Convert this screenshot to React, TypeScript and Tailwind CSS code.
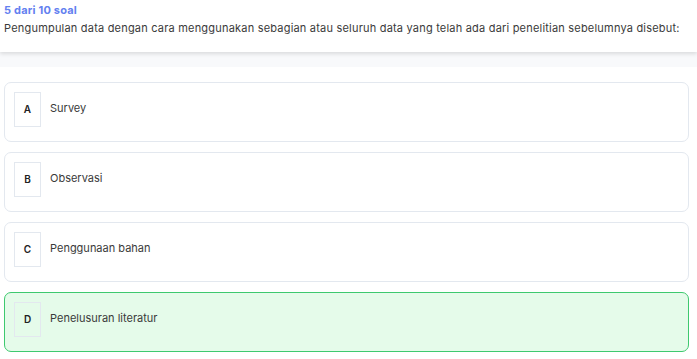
import React from "react";

const options = [
  { key: "A", text: "Survey", correct: false },
  { key: "B", text: "Observasi", correct: false },
  { key: "C", text: "Penggunaan bahan", correct: false },
  { key: "D", text: "Penelusuran literatur", correct: true },
];

export default function App() {
  return (
    <div
      className="w-[697px] h-[359px] bg-white overflow-hidden"
      style={{ fontFamily: "Inter, 'Open Sans', sans-serif" }}
    >
      <div className="relative z-10 h-[52px] bg-white shadow-[0_2px_4px_rgba(0,0,0,0.12)] px-[4px] pt-[3px]">
        <div className="text-[11px] leading-[14px] font-bold tracking-[0.2px] text-[#6380f0]">5 dari 10 soal</div>
        <div className="mt-[4px] text-[11px] leading-[14px] text-[#3a3a3a] tracking-[0.2px] whitespace-nowrap">
          Pengumpulan data dengan cara menggunakan sebagian atau seluruh data yang telah ada dari penelitian sebelumnya disebut:
        </div>
      </div>
      <div className="h-[15px] bg-[#f8f9fb]" />
      <div className="flex flex-col gap-[10px] pl-[4px] pr-[8px] pt-[15px]">
        {options.map((o) => (
          <div
            key={o.key}
            className={
              "h-[60px] rounded-[7px] border flex items-start pt-[9px] pl-[9px] " +
              (o.correct ? "border-[#3ec96f] bg-[#e5fbea]" : "border-[#e3e8ef] bg-white")
            }
          >
            <div className="w-[27px] h-[35px] border border-[#e3e8ef] flex items-center justify-center text-[10px] font-semibold text-[#222]">
              {o.key}
            </div>
            <div className="ml-[9px] mt-[9px] text-[11px] leading-[14px] text-[#3a3a3a]">{o.text}</div>
          </div>
        ))}
      </div>
    </div>
  );
}
